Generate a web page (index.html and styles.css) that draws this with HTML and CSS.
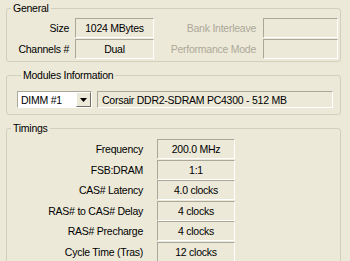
FILE: index.html
```html
<!DOCTYPE html>
<html lang="en">
<head>
    <meta charset="UTF-8">
    <title>Memory</title>
    <link rel="stylesheet" href="styles.css">
</head>
<body>
    <div class="dialog">
        <fieldset class="group general">
            <legend>General</legend>
            <div class="general-grid">
                <span class="lbl">Size</span>
                <span class="val">1024 MBytes</span>
                <span class="lbl off">Bank Interleave</span>
                <span class="val"></span>
                <span class="lbl">Channels #</span>
                <span class="val">Dual</span>
                <span class="lbl off">Performance Mode</span>
                <span class="val"></span>
            </div>
        </fieldset>
        <fieldset class="group modules">
            <legend>Modules Information</legend>
            <div class="modules-row">
                <div class="combo">
                    <span class="combo-text">DIMM #1</span>
                    <span class="combo-btn">
                        <svg width="7" height="4" viewBox="0 0 7 4"><path d="M0 0h7L3.5 4z" fill="#000"/></svg>
                    </span>
                </div>
                <div class="field">Corsair DDR2-SDRAM PC4300 - 512 MB</div>
            </div>
        </fieldset>
        <fieldset class="group timings">
            <legend>Timings</legend>
            <div class="timings-grid">
                <span class="lbl">Frequency</span><span class="val">200.0 MHz</span>
                <span class="lbl">FSB:DRAM</span><span class="val">1:1</span>
                <span class="lbl">CAS# Latency</span><span class="val">4.0 clocks</span>
                <span class="lbl">RAS# to CAS# Delay</span><span class="val">4 clocks</span>
                <span class="lbl">RAS# Precharge</span><span class="val">4 clocks</span>
                <span class="lbl">Cycle Time (Tras)</span><span class="val">12 clocks</span>
            </div>
        </fieldset>
    </div>
</body>
</html>
```

FILE: styles.css
```css
/* XP dialog look */
:root {
    --face: #ece9d8;
    --edge: #d0d0bf;
    --shade: #aca899;
    --dark: #716f64;
}
* { box-sizing: border-box; }
body {
    margin: 0;
    background: var(--face);
    color: #000;
    font-family: "Liberation Sans", Arial, sans-serif;
    font-size: 10.5px;
    letter-spacing: -0.25px;
    overflow: hidden;
}
.dialog { padding: 2px 9px 0 6px; }
.group { margin: 0; padding: 0; border: 1px solid var(--edge); border-radius: 3px; min-width: 0; }
.group legend { margin-left: 4px; padding: 0 2px; line-height: 12px; }
.modules, .timings { margin-top: 7px; }

.lbl { display: flex; align-items: center; justify-content: flex-end; white-space: nowrap; }
.lbl.off { color: var(--shade); }
.val {
    display: flex; align-items: center; justify-content: center;
    height: 20px; white-space: nowrap;
    border: 1px solid; border-color: var(--shade) #fff #fff var(--shade);
}

.general { padding: 4px 0 2px; }
.general-grid { display: grid; grid-template-columns: 62px 79px 97px 75px; grid-auto-rows: 20px; column-gap: 6px; row-gap: 1px; }
.general-grid .lbl:nth-child(3), .general-grid .lbl:nth-child(7) { margin-right: 1px; }

.modules { padding: 10px 7px 6px 10px; }
.modules-row { display: flex; gap: 5px; height: 17px; }
.combo {
    display: flex; width: 75px; background: #fff;
    border: 1px solid; border-color: var(--shade) #fff #fff var(--shade);
}
.combo-text { flex: 1; padding-left: 3px; display: flex; align-items: center; }
.combo-btn {
    width: 15px; display: flex; align-items: center; justify-content: center;
    background: var(--face);
    border: 1px solid; border-color: #fff var(--dark) var(--dark) #fff;
}
.field {
    flex: 1; display: flex; align-items: center; padding-left: 4px;
    border: 1px solid; border-color: var(--shade) #fff #fff var(--shade);
}

.timings { padding: 5px 0 10px; }
.timings-grid { display: grid; grid-template-columns: 136px 78px; grid-auto-rows: 20px; column-gap: 14px; row-gap: 0.6px; }
```
